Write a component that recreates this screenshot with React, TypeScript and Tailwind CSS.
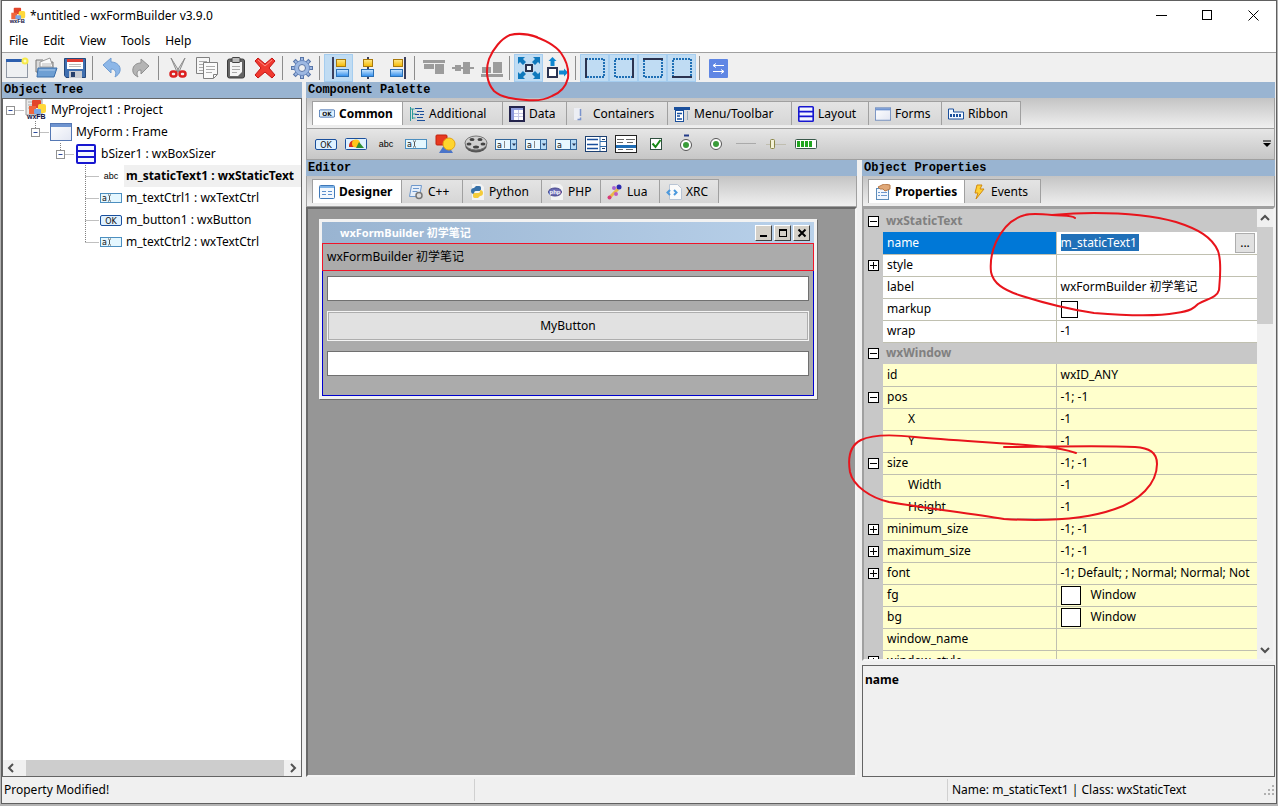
import type { ReactNode } from "react";
import clsx from "clsx";

const BLUE = "#1a4f9c";

/* ---------- shared icons ---------- */

function Svg({ w = 24, h = 24, children }: { w?: number; h?: number; children: ReactNode }) {
  return (
    <svg width={w} height={h} viewBox={`0 0 ${w} ${h}`} fill="none" className="shrink-0" aria-hidden="true">
      {children}
    </svg>
  );
}

function ShapesIcon() {
  return (
    <Svg w={22} h={20}>
      <path d="M11 8l7 11H4z" fill="#4a74c9" />
      <rect x="1" y="1" width="11" height="10" rx="1" fill="#e8391f" stroke="#c02310" />
      <circle cx="14" cy="10" r="6" fill="#ffd52e" stroke="#e6a410" />
    </Svg>
  );
}

function AppLogo({ page = false }: { page?: boolean }) {
  return (
    <svg width={page ? 22 : 18} height={page ? 22 : 18} viewBox="0 0 22 22" className="shrink-0" aria-hidden="true">
      {page && <path d="M1 0h16v16H1z" fill="#e8e8e8" stroke="#999" />}
      {page && <path d="M3 3h8M3 6h6M3 9h4" stroke="#aaa" />}
      <rect x="7" y="1" width="9" height="8" rx="1" fill="#e2452a" />
      <rect x="13" y="5" width="8" height="9" rx="2" fill="#ffd83a" />
      <path d="M4 7h7v8H4z" fill="#f0663c" />
      <rect x="9" y="10" width="7" height="5" rx="1" fill="#7aa7e6" />
      <text x="2" y="20" fontSize="7" fontWeight="700" fontFamily="Liberation Sans, sans-serif" fill="#111144">
        wxFB
      </text>
    </svg>
  );
}

function FormIcon({ w = 22, h = 18 }: { w?: number; h?: number }) {
  return (
    <svg width={w} height={h} viewBox="0 0 22 18" className="shrink-0" aria-hidden="true">
      <defs>
        <linearGradient id="formFill" x1="0" y1="0" x2="1" y2="1">
          <stop offset="0" stopColor="#fff" />
          <stop offset="1" stopColor="#e2e6f2" />
        </linearGradient>
      </defs>
      <rect x="0.5" y="0.5" width="21" height="17" fill="url(#formFill)" stroke="#5578b4" />
      <path d="M1 1h20v3H1z" fill="#6f94d0" />
    </svg>
  );
}

function SizerIcon({ w = 20, h = 20 }: { w?: number; h?: number }) {
  return (
    <svg width={w} height={h} viewBox="0 0 20 20" fill="none" className="shrink-0" aria-hidden="true">
      <rect x="1" y="1" width="18" height="18" rx="1" fill="#f4f7ff" stroke="#1616d0" strokeWidth="2" />
      <path d="M1 7h18M1 13h18" stroke="#1616d0" strokeWidth="2" />
    </svg>
  );
}

function OkIcon({ w = 22, h = 11 }: { w?: number; h?: number }) {
  return (
    <svg width={w} height={h} viewBox="0 0 22 11" className="shrink-0" aria-hidden="true">
      <rect x="0.5" y="0.5" width="21" height="10" rx="1.5" fill="#dff1ff" stroke={BLUE} />
      <text x="11" y="8.5" textAnchor="middle" fontSize="8" fontFamily="DejaVu Sans, sans-serif" fill="#111">
        OK
      </text>
    </svg>
  );
}

function AbcIcon() {
  return (
    <Svg w={22} h={12}>
      <text x="11" y="9" textAnchor="middle" fontSize="9" fontFamily="Liberation Sans, sans-serif" fill="#000">
        abc
      </text>
    </Svg>
  );
}

function TextCtrlIcon() {
  return (
    <Svg w={22} h={11}>
      <rect x="0.5" y="0.5" width="21" height="9" fill="#e4f7ff" stroke="#4c8fc0" />
      <text x="2" y="8" fontSize="8" fontFamily="DejaVu Sans, sans-serif" fill="#111">
        a
      </text>
      <path d="M8 2h1M10 2h1M9.500 2.500v5M8 8h1M10 8h1" stroke="#555" />
    </Svg>
  );
}

function ComboIcon({ caret = true }: { caret?: boolean }) {
  return (
    <Svg w={22} h={11}>
      <rect x="0.5" y="0.5" width="21" height="10" fill="#e9f8ff" stroke="#336699" />
      <rect x="15.500" y="0.5" width="6" height="10" fill="#b6dbf5" stroke="#336699" />
      <path d="M17 4.500h4l-2 2.500z" fill="#235" />
      <text x="2" y="8.500" fontSize="8" fontFamily="DejaVu Sans, sans-serif" fill="#111">
        a
      </text>
      {caret && <path d="M9.500 2v7" stroke="#888" />}
    </Svg>
  );
}

/* ---------- toolbar ---------- */

const alignIcon = (line: string, top: number, bottom: number) => (
  <Svg>
    <defs>
      <linearGradient id="gold" x1="0" y1="0" x2="0" y2="1">
        <stop offset="0" stopColor="#ffe98a" />
        <stop offset="1" stopColor="#f5b800" />
      </linearGradient>
      <linearGradient id="sky" x1="0" y1="0" x2="0" y2="1">
        <stop offset="0" stopColor="#cfe9ff" />
        <stop offset="1" stopColor="#2d8cec" />
      </linearGradient>
    </defs>
    <path d={line} stroke="#3b3f5c" strokeWidth="2" />
    <rect x={top} y="3.500" width="9" height="7" fill="url(#gold)" stroke="#a8790c" />
    <rect x={bottom} y="13.500" width="12" height="7" fill="url(#sky)" stroke="#2a6fb5" />
  </Svg>
);

const borderIcon = (edge: string) => (
  <Svg>
    <rect x="3" y="3" width="18" height="18" stroke="#1f6fb4" strokeWidth="2" strokeDasharray="2 1" />
    <path d={edge} stroke="#2b3350" strokeWidth="2" />
  </Svg>
);

type Tool = { label: string; icon: ReactNode; on?: boolean } | "sep";

const TOOLS: Tool[] = [
  {
    label: "New",
    icon: (
      <Svg>
        <rect x="1.500" y="3.500" width="21" height="18" fill="#eef0f2" stroke="#9098a4" />
        <path d="M1 3h16v3H1z" fill="#2d5fae" />
        <circle cx="20" cy="5" r="3.500" fill="#f7ea4a" />
        <circle cx="20" cy="5" r="1.500" fill="#fffbc0" />
      </Svg>
    ),
  },
  {
    label: "Open",
    icon: (
      <Svg>
        <path d="M2 4h7l2 2h8v10H2z" fill="#dadada" stroke="#777" />
        <path d="M6 6l10-4 3 9H6z" fill="#fafafa" stroke="#999" />
        <path d="M8 8h9M8 10h9" stroke="#bbb" />
        <path d="M4 12h19l-3 9H3z" fill="#6e9fd3" stroke="#3a6ea9" />
        <path d="M5 14h16" stroke="#a9caec" />
      </Svg>
    ),
  },
  {
    label: "Save",
    icon: (
      <Svg>
        <path d="M1.500 2.500h21v19H3l-1.500-2z" fill="#3f6fb0" stroke="#26487a" />
        <rect x="4" y="3" width="16" height="10" fill="#fff" />
        <path d="M4 3h16v3H4z" fill="#df3b33" />
        <path d="M6 8.500h12M6 10.500h12" stroke="#bbb" />
        <rect x="6" y="15" width="13" height="7" fill="#c9ccd2" />
        <rect x="8" y="16" width="4" height="5" fill="#27406b" />
      </Svg>
    ),
  },
  "sep",
  {
    label: "Undo",
    icon: (
      <Svg>
        <path d="M3 9l8-7v4c6 0 10 4 9 9-1 3-2 4-5 6 2-5 0-8-4-8v4z" fill="#8db7e8" stroke="#6f9cd2" />
      </Svg>
    ),
  },
  {
    label: "Redo",
    icon: (
      <Svg>
        <path d="M20 10l-8-7v4c-6 0-9 4-8 9 1 3 2 3 5 5-2-4-1-7 3-7v4z" fill="#b4b4b4" stroke="#8f8f8f" />
      </Svg>
    ),
  },
  "sep",
  {
    label: "Cut",
    icon: (
      <Svg>
        <path d="M5 2l8 13-2 1zM19 2l-8 13 2 1z" fill="#e0e0e0" stroke="#8c8c8c" />
        <rect x="4.500" y="15.500" width="6" height="5" rx="2.500" stroke="#dc1f1f" strokeWidth="2.500" />
        <rect x="13.500" y="15.500" width="6" height="5" rx="2.500" stroke="#dc1f1f" strokeWidth="2.500" />
      </Svg>
    ),
  },
  {
    label: "Copy",
    icon: (
      <Svg>
        <path d="M1.500 1.500h13v16h-13z" fill="#f6f6f6" stroke="#808080" />
        <path d="M4 5.500h8M4 8.500h5M4 11.500h5M4 14.500h5" stroke="#aaa" />
        <path d="M8.500 6.500h14v12l-4 4h-10z" fill="#fafafa" stroke="#808080" />
        <path d="M11 10.500h9M11 13.500h9M11 16.500h6" stroke="#aaa" />
        <path d="M22 18.500h-3.500V22" stroke="#808080" />
      </Svg>
    ),
  },
  {
    label: "Paste",
    icon: (
      <Svg>
        <rect x="3.500" y="3" width="17" height="19" rx="2" fill="#656565" stroke="#3c3c3c" />
        <path d="M6 6h12v10l-4 4H6z" fill="#f5f5f5" />
        <rect x="8" y="1.500" width="8" height="5" rx="1" fill="#bbb" stroke="#444" />
        <path d="M8 10.500h8M8 13.500h8M8 16.500h5" stroke="#aaa" />
      </Svg>
    ),
  },
  {
    label: "Delete",
    icon: (
      <Svg>
        <path
          d="M2 5l3-3 7 6 7-6 3 3-6 7 6 7-3 3-7-6-7 6-3-3 6-7z"
          fill="#f03a30"
          stroke="#c41414"
          strokeLinejoin="round"
        />
        <path d="M5 4l7 6 7-6" stroke="#ff8b80" />
      </Svg>
    ),
  },
  "sep",
  {
    label: "Settings",
    icon: (
      <Svg>
        <g stroke="#5875a8" strokeWidth="4">
          <path d="M12 1v22M1 12h22M4.200 4.200l15.600 15.600M19.800 4.200L4.200 19.800" />
        </g>
        <g stroke="#9db8e2" strokeWidth="2">
          <path d="M12 2v20M2 12h20M5 5l14 14M19 5L5 19" />
        </g>
        <circle cx="12" cy="12" r="7.500" fill="#9db8e2" stroke="#6d8bc0" />
        <circle cx="12" cy="12" r="3.500" fill="#f0f0f0" stroke="#5875a8" />
      </Svg>
    ),
  },
  "sep",
  { label: "Align left", on: true, icon: alignIcon("M6 1v22", 9.5, 9.5) },
  { label: "Align center horizontal", icon: alignIcon("M12 1v22", 7.5, 5.5) },
  { label: "Align right", icon: alignIcon("M20 1v22", 8.5, 5.5) },
  "sep",
  {
    label: "Align top",
    icon: (
      <Svg>
        <path d="M1 4h22v3H1zM2 8h10v5H2zM13 8h9v10h-9z" fill="#9c9c9c" />
      </Svg>
    ),
  },
  {
    label: "Align center vertical",
    icon: (
      <Svg>
        <path d="M1 11h22v2H1zM4 9h6v6H4zM12 6h7v12h-7z" fill="#9c9c9c" />
      </Svg>
    ),
  },
  {
    label: "Align bottom",
    icon: (
      <Svg>
        <path d="M1 18h22v3H1zM2 11h9v6H2zM13 6h9v11h-9z" fill="#9c9c9c" />
      </Svg>
    ),
  },
  "sep",
  {
    label: "Expand",
    on: true,
    icon: (
      <Svg>
        <rect x="9" y="9" width="6" height="6" fill="#eef6fc" stroke="#2b3350" strokeWidth="2" />
        <path
          d="M1 1h7L6 3l3 3-3 3-3-3-2 2zM23 1h-7l2 2-3 3 3 3 3-3 2 2zM1 23h7l-2-2 3-3-3-3-3 3-2-2zM23 23h-7l2-2-3-3 3-3 3 3 2-2z"
          fill="#0f79bd"
        />
      </Svg>
    ),
  },
  {
    label: "Stretch",
    icon: (
      <Svg>
        <rect x="2" y="12" width="9" height="9" fill="#fff" stroke="#2b3350" strokeWidth="2" />
        <path d="M6.500 1l4 4h-2v5h-4V5h-2zM22 16.500l-4 4v-2h-5v-4h5v-2z" fill="#0f86cf" />
      </Svg>
    ),
  },
  "sep",
  { label: "Left border", on: true, icon: borderIcon("M3 2v20") },
  { label: "Right border", on: true, icon: borderIcon("M21 2v20") },
  { label: "Top border", on: true, icon: borderIcon("M2 3h20") },
  { label: "Bottom border", on: true, icon: borderIcon("M2 21h20") },
  "sep",
  {
    label: "Swap",
    icon: (
      <Svg>
        <rect x="2" y="3" width="19" height="19" rx="1" fill="#5f86e4" />
        <path d="M6 9.500h11M9 7.500l-3 2 3 2M6 15.500h11M14 13.500l3 2-3 2" stroke="#fff" />
      </Svg>
    ),
  },
];

function Toolbar() {
  return (
    <div role="toolbar" aria-label="Main" className="flex h-[30px] shrink-0 items-center border-t border-[#a0a0a0] bg-[#f0f0f0]">
      {TOOLS.map((tool, i) =>
        tool === "sep" ? (
          <span key={i} className="flex w-2 justify-center pr-0.5">
            <span className="h-6 w-px bg-[#8c8c8c]" />
          </span>
        ) : (
          <button
            key={i}
            type="button"
            aria-label={tool.label}
            className={clsx("flex h-7 w-[29px] items-center justify-center", tool.on && "border border-[#a5cdef] bg-[#c0dcf3]")}
          >
            {tool.icon}
          </button>
        )
      )}
    </div>
  );
}

/* ---------- tabs ---------- */

type TabItem = { label: string; icon: ReactNode; width: string };

const PALETTE_TABS: TabItem[] = [
  { label: "Common", width: "w-[91px]", icon: <OkIcon w={16} h={9} /> },
  {
    label: "Additional",
    width: "w-[100px]",
    icon: (
      <Svg w={16} h={16}>
        <path d="M1.500 1v14M1.500 3h4M3.500 3v10M3.500 8h4M3.500 12h3" stroke="#2f9a9a" />
        <path d="M6 2.500h7M8 5.500h7M6 8.500h4M11 8.500h4M8 11.500h6M8 14.500h8" stroke={BLUE} />
      </Svg>
    ),
  },
  {
    label: "Data",
    width: "w-[64px]",
    icon: (
      <Svg w={16} h={16}>
        <rect x="1" y="1" width="14" height="14" fill="#fff" stroke="#24244c" strokeWidth="2" />
        <path d="M2 2h3v12H2zM2 2h12v2H2z" fill="#8e9bdc" />
        <path d="M5 7.500h9M5 10.500h9M9.500 4v10" stroke="#c9cbe6" />
      </Svg>
    ),
  },
  {
    label: "Containers",
    width: "w-[101px]",
    icon: (
      <Svg w={16} h={16}>
        <rect x="1" y="2" width="6" height="12" fill="#eceef4" />
        <path d="M7.500 3v7M4.500 13.500h3v-2" stroke="#7a93cc" strokeWidth="1.500" />
      </Svg>
    ),
  },
  {
    label: "Menu/Toolbar",
    width: "w-[124px]",
    icon: (
      <Svg w={16} h={16}>
        <path d="M0 1h16v3H0z" fill={BLUE} />
        <rect x="1.500" y="4.500" width="8" height="11" fill="#fff" stroke={BLUE} />
        <path d="M3 7.500h5M3 10h3M3 13h5" stroke={BLUE} strokeWidth="1.500" />
        <path d="M13.500 5v9" stroke="#9ab" />
      </Svg>
    ),
  },
  { label: "Layout", width: "w-[77px]", icon: <SizerIcon w={16} h={16} /> },
  { label: "Forms", width: "w-[73px]", icon: <FormIcon w={16} h={14} /> },
  {
    label: "Ribbon",
    width: "w-[79px]",
    icon: (
      <Svg w={16} h={12}>
        <path d="M0.500 1v10h15V4h-10V1z" fill="#f4f8ff" stroke={BLUE} />
        <path d="M3 6v3M6 6v3M9 6v3M12 6v3" stroke={BLUE} strokeWidth="2" />
      </Svg>
    ),
  },
];

const EDITOR_TABS: TabItem[] = [
  {
    label: "Designer",
    width: "w-[90px]",
    icon: (
      <Svg w={16} h={14}>
        <rect x="0.500" y="0.500" width="15" height="13" rx="1" fill="#f4f8fd" stroke="#3f78b8" />
        <path d="M1 1h14v2H1z" fill="#7eb2e6" />
        <path d="M3 6.500h4M3 9.500h4M9 6.500h4M9 9.500h4" stroke="#5c8fcc" />
      </Svg>
    ),
  },
  {
    label: "C++",
    width: "w-[61px]",
    icon: (
      <Svg w={16} h={16}>
        <path d="M3.500 1.500h10l-2 11h-10z" fill="#e6effa" stroke="#6e98cc" />
        <path d="M5 4.500h6M4.500 7.500h5" stroke="#6e98cc" />
        <circle cx="11" cy="11.500" r="3" fill="#ddd" stroke="#777" strokeWidth="1.500" />
      </Svg>
    ),
  },
  {
    label: "Python",
    width: "w-[79px]",
    icon: (
      <Svg w={16} h={16}>
        <path d="M3 0h9l3 3v13H3z" fill="#f3f3f3" />
        <path d="M7 2h3c2 0 2 1 2 3s-1 2-3 2H7C5 7 5 9 5 10 3 10 2 9 2 7s1-3 3-3z" fill="#3670a8" />
        <path d="M9 14H6c-2 0-2-1-2-3s1-2 3-2h2c2 0 2-1 2-3 2 0 3 1 3 3s-1 3-3 3z" fill="#f5cc3a" />
      </Svg>
    ),
  },
  {
    label: "PHP",
    width: "w-[59px]",
    icon: (
      <Svg w={16} h={16}>
        <path d="M3 0h9l3 3v13H3z" fill="#f3f3f3" />
        <ellipse cx="7" cy="8" rx="6.500" ry="4" fill="#6c6cb4" stroke="#44448a" />
        <text x="7" y="10" textAnchor="middle" fontSize="6" fontFamily="Liberation Sans, sans-serif" fontWeight="700" fill="#fff">
          php
        </text>
      </Svg>
    ),
  },
  {
    label: "Lua",
    width: "w-[59px]",
    icon: (
      <Svg w={16} h={16}>
        <path d="M3 13l8-8" stroke="#e8b84a" strokeWidth="3" />
        <circle cx="12" cy="3" r="2.500" fill="#2b2bb0" />
        <circle cx="7" cy="4" r="2" fill="#a864d0" />
        <circle cx="9" cy="10" r="2" fill="#c05ac0" />
        <circle cx="2.500" cy="13.500" r="2" fill="#d83a7a" />
      </Svg>
    ),
  },
  {
    label: "XRC",
    width: "w-[59px]",
    icon: (
      <Svg w={16} h={16}>
        <path d="M3.500 0.500h8l4 4v11h-12z" fill="#fafafa" stroke="#b8c4d4" />
        <path d="M4 6L1.500 8.500 4 11M8 6l2.500 2.500L8 11" stroke="#4b98dc" strokeWidth="2" />
      </Svg>
    ),
  },
];

const PROPERTY_TABS: TabItem[] = [
  {
    label: "Properties",
    width: "w-[97px]",
    icon: (
      <Svg w={16} h={16}>
        <rect x="1.500" y="4.500" width="12" height="11" fill="#f2f8ff" stroke="#5c8cba" />
        <path d="M3 8.500h2M6 8.500h6M3 11.500h2M6 11.500h6" stroke="#6e98cc" />
        <path d="M3 3l6-3 6 1v4l-5 2-2-2H5z" fill="#e0a878" stroke="#b87a48" />
      </Svg>
    ),
  },
  {
    label: "Events",
    width: "w-[76px]",
    icon: (
      <Svg w={16} h={16}>
        <path d="M6 1h5L9 5h4l-8 10 2-6H4z" fill="#ffd034" stroke="#d08a10" />
      </Svg>
    ),
  },
];

function Tabs({ name, items }: { name: string; items: TabItem[] }) {
  return (
    <div
      role="tablist"
      aria-label={name}
      className="flex h-[31px] shrink-0 items-end border-x border-b border-[#a0a0a0] bg-linear-to-b from-[#c4c4c4] to-[#f0f0f0] px-[5px] pb-[3px]"
    >
      {items.map((tab, i) => (
        <button
          key={tab.label}
          type="button"
          role="tab"
          aria-selected={i === 0}
          className={clsx(
            "flex h-6 shrink-0 items-center gap-1 border-r border-t border-[#a0a0a0] pl-1.5 whitespace-nowrap",
            tab.width,
            i === 0 ? "border-l bg-white font-bold" : "bg-linear-to-b from-[#e4e4e4] to-[#d6d6d6]"
          )}
        >
          {tab.icon}
          {tab.label}
        </button>
      ))}
    </div>
  );
}

function Caption({ children }: { children: ReactNode }) {
  return (
    <h2 className="h-4 shrink-0 bg-[#99b4d1] pl-0.5 font-['Liberation_Mono',monospace] text-[12px] leading-4 font-bold text-black">
      {children}
    </h2>
  );
}

/* ---------- palette ---------- */

const radioDot = (
  <>
    <circle cx="11" cy="11" r="5.500" fill="#fff" stroke="#555" />
    <circle cx="11" cy="11" r="3" fill="#3a9c3a" />
  </>
);

const COMPONENTS: { label: string; icon: ReactNode }[] = [
  { label: "wxButton", icon: <OkIcon /> },
  {
    label: "wxBitmapButton",
    icon: (
      <Svg w={22} h={12}>
        <rect x="0.500" y="0.500" width="21" height="11" rx="1" fill="#dff1ff" stroke={BLUE} />
        <path d="M4 8c0-4 3-6 6-6v7H4z" fill="#d8321c" />
        <circle cx="11" cy="5.500" r="4" fill="#ffc61a" />
        <path d="M14 4l5 6h-8z" fill="#2f8f34" />
      </Svg>
    ),
  },
  { label: "wxStaticText", icon: <AbcIcon /> },
  { label: "wxTextCtrl", icon: <TextCtrlIcon /> },
  { label: "wxStaticBitmap", icon: <ShapesIcon /> },
  {
    label: "wxAnimationCtrl",
    icon: (
      <Svg w={24} h={20}>
        <ellipse cx="12" cy="11" rx="11" ry="7.500" fill="#555" />
        <ellipse cx="12" cy="9" rx="11" ry="7" fill="#cfcfcf" stroke="#777" />
        <ellipse cx="8" cy="5.500" rx="2.500" ry="1.500" fill="#444" />
        <ellipse cx="16" cy="5.500" rx="2.500" ry="1.500" fill="#444" />
        <ellipse cx="5" cy="10" rx="2.500" ry="1.500" fill="#444" />
        <ellipse cx="19" cy="10" rx="2.500" ry="1.500" fill="#444" />
        <ellipse cx="12" cy="13" rx="3" ry="1.500" fill="#444" />
      </Svg>
    ),
  },
  { label: "wxComboBox", icon: <ComboIcon /> },
  { label: "wxBitmapComboBox", icon: <ComboIcon /> },
  { label: "wxChoice", icon: <ComboIcon caret={false} /> },
  {
    label: "wxListBox",
    icon: (
      <Svg w={22} h={16}>
        <rect x="0.500" y="0.500" width="21" height="15" fill="#fff" stroke="#1c3f70" />
        <path d="M15 1v14M15 5.500h6M15 10.500h6" stroke="#2f6cab" />
        <path d="M2 3.500h11M2 8.500h11M2 12.500h11" stroke={BLUE} strokeWidth="1.500" />
        <path d="M17 3.500h3M17 12.500h3" stroke="#1c3f70" />
      </Svg>
    ),
  },
  {
    label: "wxListCtrl",
    icon: (
      <Svg w={22} h={18}>
        <rect x="0.500" y="0.500" width="21" height="17" fill="#fff" stroke="#222" />
        <path d="M2 4.500h7M11 4.500h9M2 7.500h6M12 7.500h6M3 14.500h5M11 14.500h7" stroke="#666" />
        <path d="M1 10h20v3H1z" fill="#1f6db5" />
      </Svg>
    ),
  },
  {
    label: "wxCheckBox",
    icon: (
      <Svg w={14} h={14}>
        <rect x="1.500" y="1.500" width="11" height="11" fill="#fff" stroke="#2f4f3f" />
        <path d="M3.500 6.500l3 3.500 5-7" stroke="#168a16" strokeWidth="2" />
      </Svg>
    ),
  },
  {
    label: "wxRadioBox",
    icon: (
      <Svg w={22} h={20}>
        <path d="M9 1.500h5" stroke="#223a88" strokeWidth="2" />
        {radioDot}
      </Svg>
    ),
  },
  { label: "wxRadioButton", icon: <Svg w={22} h={22}>{radioDot}</Svg> },
  {
    label: "wxStaticLine",
    icon: (
      <Svg w={22} h={12}>
        <path d="M1 5.500h20" stroke="#aaa" />
      </Svg>
    ),
  },
  {
    label: "wxSlider",
    icon: (
      <Svg w={22} h={12}>
        <path d="M1 6.500h20" stroke="#c0beb0" />
        <rect x="5.500" y="1.500" width="4" height="9" rx="1" fill="#f4f2d8" stroke="#8a8648" />
      </Svg>
    ),
  },
  {
    label: "wxGauge",
    icon: (
      <Svg w={22} h={10}>
        <rect x="0.500" y="0.500" width="21" height="9" rx="1" fill="#fff" stroke="#39584a" />
        <path d="M2 2h3v6H2zM6 2h3v6H6zM10 2h3v6h-3zM14 2h3v6h-3z" fill="#1fa51f" />
      </Svg>
    ),
  },
];

function ComponentPalette() {
  return (
    <section className="flex shrink-0 flex-col">
      <Caption>Component Palette</Caption>
      <Tabs name="Component Palette" items={PALETTE_TABS} />
      <div className="flex h-[31px] items-center border-x border-b border-[#a0a0a0] bg-linear-to-b from-[#e6e6e6] to-[#c6c6c6] pl-1">
        {COMPONENTS.map((c) => (
          <button key={c.label} type="button" aria-label={c.label} className="flex h-7 w-[30px] shrink-0 items-center justify-center">
            {c.icon}
          </button>
        ))}
        <button type="button" aria-label="More components" className="mr-[3px] ml-auto">
          <Svg w={8} h={8}>
            <path d="M0 1h8" stroke="#000" />
            <path d="M0 3h8L4 7z" fill="#000" />
          </Svg>
        </button>
      </div>
    </section>
  );
}

/* ---------- object tree ---------- */

type Node = { label: string; icon: ReactNode; depth: number; leaf?: boolean; last?: boolean; selected?: boolean };

const NODES: Node[] = [
  { label: "MyProject1 : Project", icon: <AppLogo page />, depth: 0 },
  { label: "MyForm : Frame", icon: <FormIcon />, depth: 1 },
  { label: "bSizer1 : wxBoxSizer", icon: <SizerIcon />, depth: 2 },
  { label: "m_staticText1 : wxStaticText", icon: <AbcIcon />, depth: 3, leaf: true, selected: true },
  { label: "m_textCtrl1 : wxTextCtrl", icon: <TextCtrlIcon />, depth: 3, leaf: true },
  { label: "m_button1 : wxButton", icon: <OkIcon />, depth: 3, leaf: true },
  { label: "m_textCtrl2 : wxTextCtrl", icon: <TextCtrlIcon />, depth: 3, leaf: true, last: true },
];

function Branch({ node }: { node: Node }) {
  const w = 21 + node.depth * 25;
  const x = w - 13.5;
  return (
    <Svg w={w} h={22}>
      <g stroke="#808080" strokeDasharray="1 1">
        {node.depth > 0 && <path d={`M${x} 0v${node.leaf && !node.last ? 22 : 11}`} />}
        <path d={`M${x} 11.500h14`} />
      </g>
      {!node.leaf && (
        <>
          <rect x={x - 4} y="7.500" width="8" height="8" fill="#fff" stroke="#919191" />
          <path d={`M${x - 2} 11.500h4`} stroke="#2b4a9c" />
        </>
      )}
    </Svg>
  );
}

function ObjectTree() {
  return (
    <section className="flex w-[300px] shrink-0 flex-col">
      <Caption>Object Tree</Caption>
      <div className="flex min-h-0 flex-1 flex-col border border-[#646464] bg-white">
        <ul role="tree" aria-label="Object Tree" className="min-h-0 flex-1 overflow-hidden">
          {NODES.map((node) => (
            <li key={node.label} role="treeitem" aria-selected={!!node.selected} className="flex h-[22px] items-center whitespace-nowrap">
              <Branch node={node} />
              <span className="flex w-6 shrink-0 items-center justify-center">{node.icon}</span>
              <span className={clsx("ml-px flex-1 pl-0.5 leading-[22px]", node.selected && "bg-[#f0f0f0] font-bold")}>{node.label}</span>
            </li>
          ))}
        </ul>
        <div className="flex h-4 shrink-0 items-center bg-[#f0f0f0]">
          <span className="flex w-[23px] justify-start pl-1">
            <Chevron d="M6 1L2 5l4 4" />
          </span>
          <span className="h-full flex-1 bg-[#cdcdcd]" />
          <span className="flex w-[17px] justify-center">
            <Chevron d="M3 1l4 4-4 4" />
          </span>
        </div>
      </div>
    </section>
  );
}

function Chevron({ d }: { d: string }) {
  return (
    <Svg w={10} h={10}>
      <path d={d} stroke="#505050" strokeWidth="2" />
    </Svg>
  );
}

/* ---------- designer ---------- */

function FrameButton({ label, children }: { label: string; children: ReactNode }) {
  return (
    <button
      type="button"
      aria-label={label}
      className="flex h-4 w-[17px] items-center justify-center border border-t-white border-r-[#404040] border-b-[#404040] border-l-white bg-[#d4d0c8]"
    >
      <Svg w={10} h={10}>
        {children}
      </Svg>
    </button>
  );
}

function DesignedForm() {
  return (
    <div className="w-[498px] border-3 border-[#f2f2f2] shadow-[1px_1px_0_#696969]">
      <div className="flex h-[21px] items-center gap-0.5 bg-linear-to-r from-[#99b4d1] to-[#b9d1ea] pr-1 pl-[18px]">
        <span className="flex-1 text-[11px] font-bold text-white">wxFormBuilder 初学笔记</span>
        <FrameButton label="Minimize">
          <path d="M1 8h7" stroke="#000" strokeWidth="2" />
        </FrameButton>
        <FrameButton label="Maximize">
          <path d="M1 1h8v2H1z" fill="#000" />
          <rect x="1.500" y="1.500" width="7" height="7" stroke="#000" />
        </FrameButton>
        <FrameButton label="Close">
          <path d="M1.500 1.500l7 7M8.500 1.500l-7 7" stroke="#000" strokeWidth="2" />
        </FrameButton>
      </div>
      <div className="border border-t-0 border-[#0000d0] bg-[#ababab] pb-[19px]">
        <p className="-mx-px flex h-7 items-center border border-[#f01428] pl-1">wxFormBuilder 初学笔记</p>
        <div className="flex flex-col gap-2.5 px-1 pt-[5px]">
          <input aria-label="m_textCtrl1" className="h-[25px] w-full border border-[#707070] bg-white px-1" />
          <button type="button" className="h-[30px] w-full border border-[#f4f4f4] bg-[#e1e1e1] text-center ring-1 ring-[#adadad] ring-inset">
            MyButton
          </button>
          <input aria-label="m_textCtrl2" className="h-[25px] w-full border border-[#707070] bg-white px-1" />
        </div>
      </div>
    </div>
  );
}

function Editor() {
  return (
    <section className="flex min-w-0 flex-1 flex-col">
      <Caption>Editor</Caption>
      <Tabs name="Editor" items={EDITOR_TABS} />
      <div className="min-h-0 flex-1 overflow-hidden border-2 border-t-[#696969] border-r-[#f4f4f4] border-b-[#f4f4f4] border-l-[#696969] bg-[#969696] py-2.5 pl-[11px]">
        <DesignedForm />
      </div>
    </section>
  );
}

/* ---------- properties ---------- */

type Row = {
  name: string;
  value?: string;
  box?: "+" | "-";
  kind?: "category" | "edit" | "check" | "colour";
  sub?: boolean;
  plain?: boolean;
};

const ROWS: Row[] = [
  { name: "wxStaticText", kind: "category", box: "-" },
  { name: "name", value: "m_staticText1", kind: "edit", plain: true },
  { name: "style", box: "+", plain: true },
  { name: "label", value: "wxFormBuilder 初学笔记", plain: true },
  { name: "markup", kind: "check", plain: true },
  { name: "wrap", value: "-1", plain: true },
  { name: "wxWindow", kind: "category", box: "-" },
  { name: "id", value: "wxID_ANY" },
  { name: "pos", value: "-1; -1", box: "-" },
  { name: "X", value: "-1", sub: true },
  { name: "Y", value: "-1", sub: true },
  { name: "size", value: "-1; -1", box: "-" },
  { name: "Width", value: "-1", sub: true },
  { name: "Height", value: "-1", sub: true },
  { name: "minimum_size", value: "-1; -1", box: "+" },
  { name: "maximum_size", value: "-1; -1", box: "+" },
  { name: "font", value: "-1; Default; ; Normal; Normal; Not", box: "+" },
  { name: "fg", value: "Window", kind: "colour" },
  { name: "bg", value: "Window", kind: "colour" },
  { name: "window_name" },
  { name: "window_style", box: "+" },
];

function Expander({ state }: { state: "+" | "-" }) {
  return (
    <button type="button" aria-label={state === "+" ? "Expand" : "Collapse"} className="mx-auto block">
      <Svg w={11} h={11}>
        <rect x="0.500" y="0.500" width="10" height="10" fill="#fff" stroke="#000" />
        <path d={state === "+" ? "M2 5.500h7M5.500 2v7" : "M2 5.500h7"} stroke="#000" />
      </Svg>
    </button>
  );
}

function Value({ row }: { row: Row }) {
  if (row.kind === "edit") {
    return (
      <div className="flex items-center justify-between pr-0.5">
        <input aria-label={row.name} defaultValue={row.value} className="h-[17px] w-[78px] bg-[#2070b8] text-white" />
        <button type="button" aria-label="Edit value" className="h-5 w-5 border border-[#adadad] bg-[#e1e1e1] leading-3">
          ...
        </button>
      </div>
    );
  }
  if (row.kind === "check") {
    return <input type="checkbox" aria-label={row.name} className="block size-[17px] appearance-none border border-black bg-white" />;
  }
  if (row.kind === "colour") {
    return (
      <div className="flex items-center gap-2.5">
        <span className="h-[19px] w-5 border border-black bg-white" />
        {row.value}
      </div>
    );
  }
  return <>{row.value}</>;
}

function PropertyGrid() {
  return (
    <div className="flex min-h-0 flex-1 border-2 border-[#a0a0a0] border-r-[#f4f4f4] border-b-[#f4f4f4] bg-[#f0f0f0]">
      <div className="min-h-0 min-w-0 flex-1 overflow-hidden bg-[#c8c8c8] pt-px">
        <table className="w-full table-fixed border-collapse">
          <colgroup>
            <col className="w-[19px]" />
            <col className="w-[173px]" />
            <col />
          </colgroup>
          <tbody>
            {ROWS.map((row) => (
              <tr key={row.name} className="h-[22px]">
                <td className="bg-[#c8c8c8] p-0">{row.box && <Expander state={row.box} />}</td>
                {row.kind === "category" ? (
                  <th colSpan={2} className="bg-[#c8c8c8] p-0 pl-[3px] text-left font-bold text-[#808080]">
                    {row.name}
                  </th>
                ) : (
                  <>
                    <th
                      scope="row"
                      className={clsx(
                        "h-[22px] border-r border-b border-[#c0c0b0] p-0 text-left font-normal",
                        row.sub ? "pl-[25px]" : "pl-1",
                        row.kind === "edit" ? "bg-[#0078d7] text-white" : row.plain ? "bg-white" : "bg-[#ffffcc]"
                      )}
                    >
                      {row.name}
                    </th>
                    <td
                      className={clsx(
                        "h-[22px] overflow-hidden border-b border-[#c0c0b0] p-0 pl-1 whitespace-nowrap",
                        row.plain ? "bg-white" : "bg-[#ffffcc]"
                      )}
                    >
                      <Value row={row} />
                    </td>
                  </>
                )}
              </tr>
            ))}
          </tbody>
        </table>
      </div>
      <div className="flex w-4 shrink-0 flex-col items-center py-1">
        <Chevron d="M1 7l4-4 4 4" />
        <span className="mt-1 h-[97px] w-full bg-[#cdcdcd]" />
        <span className="mt-auto">
          <Chevron d="M1 3l4 4 4-4" />
        </span>
      </div>
    </div>
  );
}

function ObjectProperties() {
  return (
    <section className="flex w-[413px] shrink-0 flex-col">
      <Caption>Object Properties</Caption>
      <Tabs name="Object Properties" items={PROPERTY_TABS} />
      <PropertyGrid />
      <div className="mt-1 h-28 shrink-0 border border-[#646464] bg-[#f0f0f0] px-0.5 py-1.5 font-bold">name</div>
    </section>
  );
}

/* ---------- window ---------- */

// Hand-drawn pen strokes over the window
function PenMarks() {
  return (
    <svg width="1278" height="806" viewBox="0 0 1278 806" fill="none" className="pointer-events-none absolute top-0 left-0" aria-hidden="true">
      <g stroke="#e8141c" strokeWidth="2" strokeLinecap="round" strokeLinejoin="round">
        <path d="M537 37c-9-3-19-4-27-2-9 4-17 14-21 24-4 12-2 24 5 32 8 7 20 8 32 9 10 1 19 0 26-4 8-3 14-10 16-18 1-9-2-18-7-25-6-8-18-14-31-18" />
        <path d="M1075 218c-3-3-11-2-23-3-10-1-20-2-27 0-12 3-22 12-29 27-4 9-6 20-5 30 2 11 12 18 31 24 22 7 45 13 72 17 25 2 60 4 82 0 15-2 18-5 22-9 8-5 19-6 21-14 1-12 3-28-1-39-6-14-20-22-42-29-25-7-54-9-82-9-16 0-31 1-42 2" />
        <path d="M1076 453c-9-3-18-5-29-6-35-4-90-6-132-10-18-2-42-3-54 3-12 6-13 20-11 32 3 14 21 26 39 30 35 6 78 11 115 17 33 2 77 2 111-10 24-8 42-25 42-45 0-12-8-16-22-17-39-2-90 0-131 0" />
      </g>
    </svg>
  );
}

function TitleBar() {
  return (
    <header className="flex h-[29px] shrink-0 items-center pl-1.5">
      <AppLogo />
      <h1 className="ml-1 flex-1">*untitled - wxFormBuilder v3.9.0</h1>
      <button type="button" aria-label="Minimize" className="flex w-[46px] justify-center">
        <Svg w={11} h={11}>
          <path d="M0 5.500h11" stroke="#000" />
        </Svg>
      </button>
      <button type="button" aria-label="Maximize" className="flex w-[46px] justify-center">
        <Svg w={11} h={11}>
          <rect x="0.500" y="0.500" width="9" height="9" stroke="#000" />
        </Svg>
      </button>
      <button type="button" aria-label="Close" className="flex w-[46px] justify-center">
        <Svg w={11} h={11}>
          <path d="M0.500 0.500l10 10M10.500 0.500l-10 10" stroke="#000" />
        </Svg>
      </button>
    </header>
  );
}

const MENUS = ["File", "Edit", "View", "Tools", "Help"];

export default function App() {
  return (
    <div className="relative flex h-screen flex-col overflow-hidden bg-[#b4b4b4] pr-px pb-0.5 pl-px font-['Noto_Sans','Noto_Sans_CJK_SC',sans-serif] text-[12px] leading-4 text-black">
      <div className="flex min-h-0 flex-1 flex-col border border-[#606060] bg-white">
        <TitleBar />
        <nav className="flex h-[22px] shrink-0 items-center gap-px">
          {MENUS.map((m) => (
            <button key={m} type="button" className="px-[7px]">
              {m}
            </button>
          ))}
        </nav>
        <Toolbar />
        <main className="flex min-h-0 flex-1 gap-1 bg-[#f0f0f0] pr-px">
          <ObjectTree />
          <div className="flex min-w-0 flex-1 flex-col">
            <ComponentPalette />
            <div className="flex min-h-0 flex-1 gap-[5px]">
              <Editor />
              <ObjectProperties />
            </div>
          </div>
        </main>
        <footer className="flex h-[26px] shrink-0 items-center bg-[#f0f0f0]">
          <span className="w-[473px] border-r border-[#d0d0d0] pl-0.5 leading-[22px]">Property Modified!</span>
          <span className="h-[22px] flex-1 border-r border-[#d0d0d0]" />
          <span className="w-[316px] pl-1">Name: m_staticText1 | Class: wxStaticText</span>
          <Svg w={12} h={12}>
            <path d="M8 1h2v2H8zM8 5h2v2H8zM4 5h2v2H4zM8 9h2v2H8zM4 9h2v2H4zM0 9h2v2H0z" fill="#b0b0b0" />
          </Svg>
        </footer>
      </div>
      <PenMarks />
    </div>
  );
}
